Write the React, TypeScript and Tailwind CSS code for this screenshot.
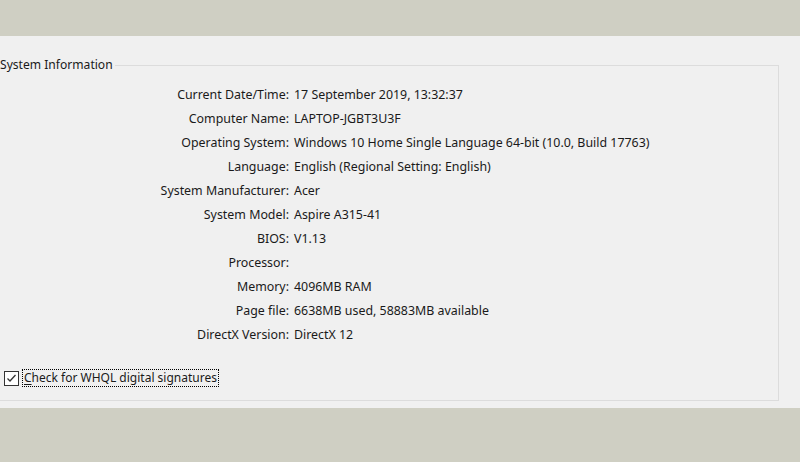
const rows: [string, string][] = [
  ['Current Date/Time:', '17 September 2019, 13:32:37'],
  ['Computer Name:', 'LAPTOP-JGBT3U3F'],
  ['Operating System:', 'Windows 10 Home Single Language 64-bit (10.0, Build 17763)'],
  ['Language:', 'English (Regional Setting: English)'],
  ['System Manufacturer:', 'Acer'],
  ['System Model:', 'Aspire A315-41'],
  ['BIOS:', 'V1.13'],
  ['Processor:', ''],
  ['Memory:', '4096MB RAM'],
  ['Page file:', '6638MB used, 58883MB available'],
  ['DirectX Version:', 'DirectX 12'],
];

export default function App() {
  return (
    <div
      className="w-[800px] h-[462px] flex flex-col bg-[#cfcfc3] text-[12.4px] text-[#1a1a1a] overflow-hidden"
      style={{ fontFamily: '"Noto Sans", "DejaVu Sans", sans-serif' }}
    >
      <div className="h-[36px] shrink-0" />
      <div className="h-[372px] shrink-0 bg-[#f0f0f0] pt-[21px]">
        <fieldset className="ml-[-6px] mr-[21px] h-[344px] border border-[#dcdcdc] px-0">
          <legend className="ml-[5px] pr-[2px] leading-[16px] text-[12.1px]">System Information</legend>
          <div className="grid grid-cols-[294px_1fr] gap-x-[5px] mt-[10px]">
            {rows.map(([label, value]) => (
              <div key={label} className="contents">
                <div className="text-right h-[24px] leading-[24px] whitespace-nowrap">{label}</div>
                <div className="h-[24px] leading-[24px] whitespace-nowrap">{value}</div>
              </div>
            ))}
          </div>
          <div className="flex items-center mt-[22px] ml-[9px] gap-[3px]">
            <div className="w-[15px] h-[15px] border border-[#333] bg-white flex items-center justify-center">
              <svg width="11" height="11" viewBox="0 0 11 11">
                <path d="M1.5 5.5 L4 8 L9.5 2" fill="none" stroke="#333" strokeWidth="1.3" />
              </svg>
            </div>
            <div className="border border-dotted border-black px-[1px] leading-[16px] text-[12px]">
              <span className="underline underline-offset-2">C</span>heck for WHQL digital signatures
            </div>
          </div>
        </fieldset>
      </div>
      <div className="flex-1" />
    </div>
  );
}
